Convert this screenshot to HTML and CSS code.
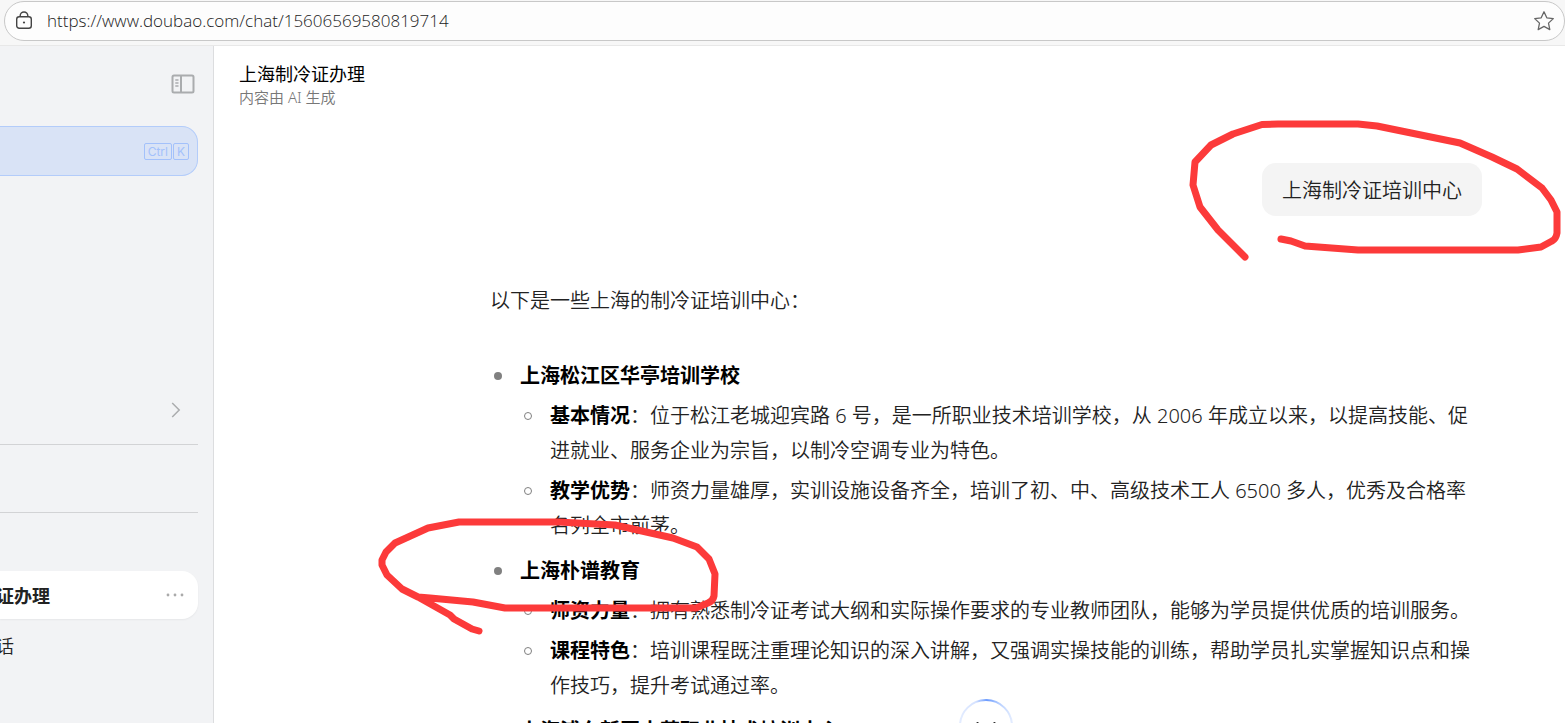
FILE: index.html
```html
<!DOCTYPE html>
<html lang="zh-CN">
<head>
    <meta charset="UTF-8">
    <meta name="viewport" content="width=device-width, initial-scale=1.0">
    <title>上海制冷证办理</title>
    <link rel="stylesheet" href="styles.css">
</head>
<body>
    <header class="browser-bar">
        <form class="address">
            <svg class="lock" width="18" height="20" viewBox="0 0 18 20" fill="none" stroke="#444" stroke-width="1.4">
                <rect x="1.7" y="5.7" width="14.6" height="11.6" rx="2.5"/>
                <path d="M5.2 5.500V4.600a3.800 3.600 0 0 1 7.600 0V5.500"/>
                <circle cx="9" cy="11.500" r="1.100" fill="#444" stroke="none"/>
            </svg>
            <input type="text" class="url" aria-label="地址" value="https://www.doubao.com/chat/15606569580819714">
            <button type="button" class="icon-button" aria-label="收藏">
                <svg width="22" height="22" viewBox="0 0 22 22" fill="none" stroke="#666" stroke-width="1.300" stroke-linejoin="round">
                    <path d="M11 1.800l2.800 6 6.500.8-4.800 4.500 1.300 6.500L11 16.400l-5.800 3.200 1.300-6.500L1.700 8.600l6.500-.8z"/>
                </svg>
            </button>
        </form>
    </header>

    <div class="app">
        <aside class="sidebar">
            <div class="sidebar-top">
                <button type="button" class="icon-button" aria-label="收起侧边栏">
                    <svg width="24" height="20" viewBox="0 0 24 20" fill="none" stroke="#aaacae" stroke-width="2">
                        <rect x="1.500" y="1.500" width="21" height="17" rx="1.500"/>
                        <path d="M10 1.500v17"/>
                        <path d="M4.300 6h3.200M4.300 9h3.200M4.300 12h3.200" stroke-width="1.300"/>
                    </svg>
                </button>
            </div>
            <button type="button" class="new-chat" aria-label="新对话">
                <kbd>Ctrl</kbd><kbd>K</kbd>
            </button>
            <div class="sidebar-more">
                <button type="button" class="icon-button" aria-label="更多">
                    <svg width="10" height="16" viewBox="0 0 10 16" fill="none" stroke="#aaacae" stroke-width="1.500">
                        <path d="M1.200 1l7 7-7 7"/>
                    </svg>
                </button>
            </div>
            <div class="sidebar-group"></div>
            <nav class="history">
                <div class="history-item active">
                    <a href="#">证办理</a>
                    <button type="button" class="icon-button" aria-label="更多操作">
                        <svg width="18" height="4" viewBox="0 0 18 4" fill="#aaa">
                            <circle cx="2" cy="2" r="1.400"/>
                            <circle cx="9" cy="2" r="1.400"/>
                            <circle cx="16" cy="2" r="1.400"/>
                        </svg>
                    </button>
                </div>
                <div class="history-item short">
                    <a href="#">话</a>
                </div>
            </nav>
        </aside>

        <main class="chat">
            <div class="chat-header">
                <h1>上海制冷证办理</h1>
                <p>内容由 AI 生成</p>
            </div>

            <div class="messages">
                <div class="question">上海制冷证培训中心</div>

                <div class="answer">
                    <p>以下是一些上海的制冷证培训中心：</p>
                    <ul>
                        <li><strong>上海松江区华亭培训学校</strong>
                            <ul>
                                <li><strong>基本情况</strong>：位于松江老城迎宾路 6 号，是一所职业技术培训学校，从 2006 年成立以来，以提高技能、促进就业、服务企业为宗旨，以制冷空调专业为特色。</li>
                                <li><strong>教学优势</strong>：师资力量雄厚，实训设施设备齐全，培训了初、中、高级技术工人 6500 多人，优秀及合格率名列全市前茅。</li>
                            </ul>
                        </li>
                        <li><strong>上海朴谱教育</strong>
                            <ul>
                                <li><strong>师资力量</strong>：拥有熟悉制冷证考试大纲和实际操作要求的专业教师团队，能够为学员提供优质的培训服务。</li>
                                <li><strong>课程特色</strong>：培训课程既注重理论知识的深入讲解，又强调实操技能的训练，帮助学员扎实掌握知识点和操作技巧，提升考试通过率。</li>
                            </ul>
                        </li>
                        <li><strong>上海浦东新区中荷职业技术培训中心</strong></li>
                    </ul>
                </div>

                <button type="button" class="scroll-down" aria-label="回到底部">
                    <svg width="54" height="54" viewBox="0 0 54 54" fill="none">
                        <defs>
                            <linearGradient id="ring">
                                <stop offset="0" stop-color="#e3ecff"/>
                                <stop offset="0.3" stop-color="#d5e2ff"/>
                                <stop offset="0.52" stop-color="#6b9bff"/>
                                <stop offset="0.75" stop-color="#b5ceff"/>
                                <stop offset="1" stop-color="#e3ecff"/>
                            </linearGradient>
                        </defs>
                        <circle cx="27" cy="27" r="26" fill="#fff" stroke="url(#ring)" stroke-width="2"/>
                        <path d="M18.500 24l8.500 8 8.500-8" stroke="#222" stroke-width="2" stroke-linecap="round"/>
                    </svg>
                </button>
            </div>

            <svg class="mark mark-question" width="385" height="180" viewBox="0 0 385 180">
                <path d="M65 157L38 130 20 107 13 85 15 62 31 45 53 34 82 24.500 98 24H178L197 26 280 43 312 57 337 69 362 88 371 100 377 112V133Q376 139 372 141L361 147 338 150H178L125 146 111 141 101 139"/>
            </svg>
            <svg class="mark mark-answer" width="370" height="150" viewBox="0 0 370 150">
                <path d="M109 131L102 129 84 119 80 115 48 97 32 89 17 75 12 65V60L16 52 25 43 58 28 89 22H188L245 25 303 38 327 47 339 59 345 74 344 96Q343 101 338 103L326 108H135L103 102 60 98 48 97"/>
            </svg>
        </main>
    </div>
</body>
</html>
```
FILE: styles.css
```css
*,
*::before {
    margin: 0;
    padding: 0;
    box-sizing: border-box;
}

body {
    font-family: "Noto Sans", "Noto Sans CJK SC", sans-serif;
    font-weight: 350;
    background: #fff;
    color: #222;
    display: flex;
    flex-direction: column;
    height: 100vh;
    overflow: hidden;
}

button {
    font: inherit;
    background: none;
    border: none;
    cursor: pointer;
}

a {
    color: inherit;
    text-decoration: none;
}

ul {
    list-style: none;
}

.icon-button {
    display: flex;
}

/* Browser bar */
.browser-bar {
    flex: none;
    height: 46px;
    padding: 1px 0 0 4px;
    background: #f7f7f7;
    border-bottom: 1px solid #e8e8e8;
}

.address {
    display: flex;
    align-items: center;
    gap: 14px;
    height: 40px;
    padding: 0 9px 0 10px;
    background: #fdfdfd;
    border: 1px solid #c8c8c8;
    border-radius: 20px;
}

.url {
    flex: 1;
    padding-bottom: 2px;
    border: none;
    outline: none;
    background: none;
    color: #222;
    font-family: "Open Sans", sans-serif;
    font-size: 17px;
    font-weight: 300;
}

.app {
    flex: 1;
    display: flex;
    min-height: 0;
}

/* Sidebar */
.sidebar {
    flex: none;
    width: 214px;
    padding-right: 15px;
    background: #f2f3f5;
    border-right: 1px solid #dcdddf;
}

.sidebar-top {
    display: flex;
    justify-content: flex-end;
    padding: 28px 3px 32px;
}

.new-chat {
    display: flex;
    align-items: center;
    justify-content: flex-end;
    gap: 1px;
    width: 100%;
    height: 50px;
    padding-right: 8px;
    background: #d9e3f6;
    border: 1px solid #b3ccfa;
    border-left: none;
    border-radius: 0 16px 16px 0;
}

kbd {
    height: 17px;
    padding: 0 3px;
    border: 1px solid #a3c1fb;
    border-radius: 2px;
    color: #a3c1fb;
    font-family: Inter, sans-serif;
    font-size: 12px;
    font-weight: 400;
    line-height: 15px;
}

.sidebar-more {
    display: flex;
    justify-content: flex-end;
    align-items: flex-end;
    height: 269px;
    padding: 0 17px 26px;
    border-bottom: 1px solid #d2d3d5;
}

.sidebar-group {
    height: 68px;
    border-bottom: 1px solid #d2d3d5;
}

.history {
    margin-top: 58px;
    font-size: 18px;
}

.history-item {
    display: flex;
    align-items: center;
    justify-content: space-between;
    height: 48px;
    padding-right: 14px;
}

.history-item a {
    display: flex;
    justify-content: flex-end;
    width: 50px;
    white-space: nowrap;
}

.history-item.active {
    background: #fff;
    border-radius: 0 16px 16px 0;
    box-shadow: 0 1px 2px rgba(0, 0, 0, 0.05);
    font-weight: bold;
}

.history-item.short {
    height: 52px;
}

.history-item.short a {
    width: 14px;
}

/* Chat */
.chat {
    flex: 1;
    position: relative;
    min-width: 0;
    overflow: hidden;
}

.chat-header {
    height: 117px;
    padding: 15px 25px;
}

.chat-header h1 {
    color: #000;
    font-size: 18px;
    font-weight: 400;
    line-height: 26px;
}

.chat-header p {
    color: #777;
    font-size: 15px;
    line-height: 20px;
}

.messages {
    position: relative;
    display: flex;
    flex-direction: column;
    margin: 0 83px 0 276px;
    font-size: 20px;
    line-height: 35px;
}

.question {
    align-self: flex-end;
    padding: 10px 20px 8px;
    background: #f4f4f4;
    border-radius: 14px;
}

.answer {
    margin-top: 67px;
}

.answer p {
    margin-bottom: 40px;
}

.answer li {
    margin-bottom: 10px;
    padding-left: 30px;
}

.answer li li {
    margin: 5px 0 0;
}

.answer strong {
    color: #000;
    font-weight: 700;
}

.answer li::before {
    content: "";
    display: inline-block;
    width: 8px;
    height: 8px;
    margin: 0 18px 0 -26px;
    background: #808080;
    border-radius: 50%;
    vertical-align: 3px;
}

.answer li li::before {
    background: none;
    border: 1px solid #808080;
}

.scroll-down {
    position: absolute;
    top: 536px;
    left: 50%;
    width: 54px;
    height: 54px;
    margin-left: -27px;
}

/* Red pen marks over the messages */
.mark {
    position: absolute;
    fill: none;
    stroke: #fc3a3a;
    stroke-width: 7;
    stroke-linecap: round;
    stroke-linejoin: round;
    pointer-events: none;
}

.mark-question {
    top: 54px;
    right: 0;
}

.mark-answer {
    top: 454px;
    left: 156px;
}
```
